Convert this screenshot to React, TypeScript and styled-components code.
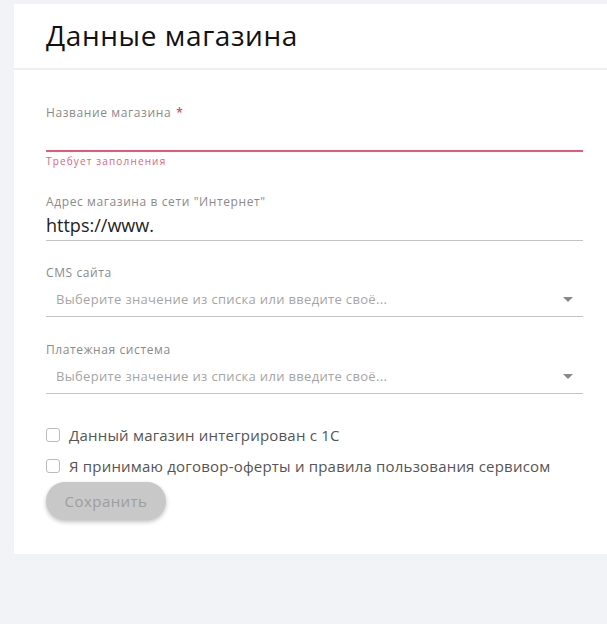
import React, { useState } from 'react';
import styled, { createGlobalStyle } from 'styled-components';

const GlobalStyle = createGlobalStyle`
  body {
    margin: 0;
    background-color: #f2f3f7;
    font-family: 'Open Sans', 'Noto Sans', sans-serif;
  }
`;

const Page = styled.div`
  padding: 4px 0 0 14px;
  min-height: 620px;
`;

const Card = styled.section`
  background-color: #fff;
`;

const Header = styled.header`
  height: 64px;
  display: flex;
  align-items: center;
  padding-left: 32px;
  border-bottom: 2px solid #eff0f4;
`;

const Title = styled.h1`
  margin: 0;
  font-size: 28px;
  font-weight: 500;
  letter-spacing: 0.6px;
  color: #111;
  padding-bottom: 2px;
`;

const Form = styled.form`
  display: flex;
  flex-direction: column;
  padding: 35px 24px 34px 32px;
`;

const Field = styled.div<{ $gap?: number }>`
  display: flex;
  flex-direction: column;
  margin-bottom: ${props => props.$gap ?? 24}px;
`;

const Label = styled.label`
  font-size: 12px;
  letter-spacing: 0.6px;
  line-height: 16px;
  color: #8a8a8a;
`;

const Required = styled.span`
  color: #e0405e;
  margin-left: 5px;
  font-weight: 600;
`;

const InputLine = styled.div<{ $invalid?: boolean }>`
  display: flex;
  height: ${props => (props.$invalid ? 29 : 30)}px;
  border-bottom: ${props => (props.$invalid ? '2px solid #e8587a' : '1px solid #c4c4c4')};
`;

const TextInput = styled.input`
  flex: 1;
  border: none;
  outline: none;
  padding: 0;
  font-family: inherit;
  font-size: 18px;
  color: #222;
  background: transparent;
`;

const ErrorText = styled.span`
  font-size: 10px;
  letter-spacing: 1.15px;
  line-height: 12px;
  margin-top: 3px;
  color: #e5637c;
`;

const SelectBox = styled.div`
  height: 35px;
  display: flex;
  align-items: center;
  justify-content: space-between;
  padding: 0 10px;
  border-bottom: 1px solid #c4c4c4;
  cursor: pointer;
`;

const Placeholder = styled.span`
  font-size: 13px;
  letter-spacing: 0.33px;
  color: #a5a5a5;
`;

const Arrow = styled.span`
  width: 0;
  height: 0;
  border-left: 5px solid transparent;
  border-right: 5px solid transparent;
  border-top: 5px solid #888;
  margin-top: 2px;
`;

const Checks = styled.div`
  display: flex;
  flex-direction: column;
  margin-top: 25px;
`;

const CheckRow = styled.label`
  display: flex;
  align-items: center;
  gap: 9px;
  height: 31px;
  font-size: 15px;
  letter-spacing: 0.2px;
  color: #555;
  cursor: pointer;
`;

const CheckBox = styled.input`
  appearance: none;
  width: 14px;
  height: 14px;
  margin: 0;
  border: 1px solid #bbb;
  border-radius: 3px;
  background: #fff;
  &:checked {
    background: #e0405e;
    border-color: #e0405e;
  }
`;

const SaveButton = styled.button`
  align-self: flex-start;
  margin-top: 1px;
  width: 120px;
  height: 38px;
  border: none;
  border-radius: 19px;
  background-color: #c8c8c8;
  color: #9d9d9d;
  font-family: inherit;
  font-size: 15px;
  letter-spacing: 0.45px;
  box-shadow: 0 2px 4px rgba(0, 0, 0, 0.25);
  cursor: default;
`;

const SELECT_PLACEHOLDER = 'Выберите значение из списка или введите своё...';

const App = () => {
  const [name, setName] = useState('');
  const [url, setUrl] = useState('https://www.');

  return (
    <>
      <GlobalStyle />
      <Page>
        <Card>
          <Header>
            <Title>Данные магазина</Title>
          </Header>
          <Form onSubmit={e => e.preventDefault()}>
            <Field $gap={27}>
              <Label>
                Название магазина<Required>*</Required>
              </Label>
              <InputLine $invalid>
                <TextInput value={name} onChange={e => setName(e.target.value)} />
              </InputLine>
              <ErrorText>Требует заполнения</ErrorText>
            </Field>
            <Field>
              <Label>Адрес магазина в сети "Интернет"</Label>
              <InputLine>
                <TextInput value={url} onChange={e => setUrl(e.target.value)} />
              </InputLine>
            </Field>
            <Field $gap={25}>
              <Label>CMS сайта</Label>
              <SelectBox>
                <Placeholder>{SELECT_PLACEHOLDER}</Placeholder>
                <Arrow />
              </SelectBox>
            </Field>
            <Field $gap={0}>
              <Label>Платежная система</Label>
              <SelectBox>
                <Placeholder>{SELECT_PLACEHOLDER}</Placeholder>
                <Arrow />
              </SelectBox>
            </Field>
            <Checks>
              <CheckRow>
                <CheckBox type="checkbox" />
                Данный магазин интегрирован с 1С
              </CheckRow>
              <CheckRow>
                <CheckBox type="checkbox" />
                Я принимаю договор-оферты и правила пользования сервисом
              </CheckRow>
            </Checks>
            <SaveButton type="submit" disabled>
              Сохранить
            </SaveButton>
          </Form>
        </Card>
      </Page>
    </>
  );
};

export default App;
